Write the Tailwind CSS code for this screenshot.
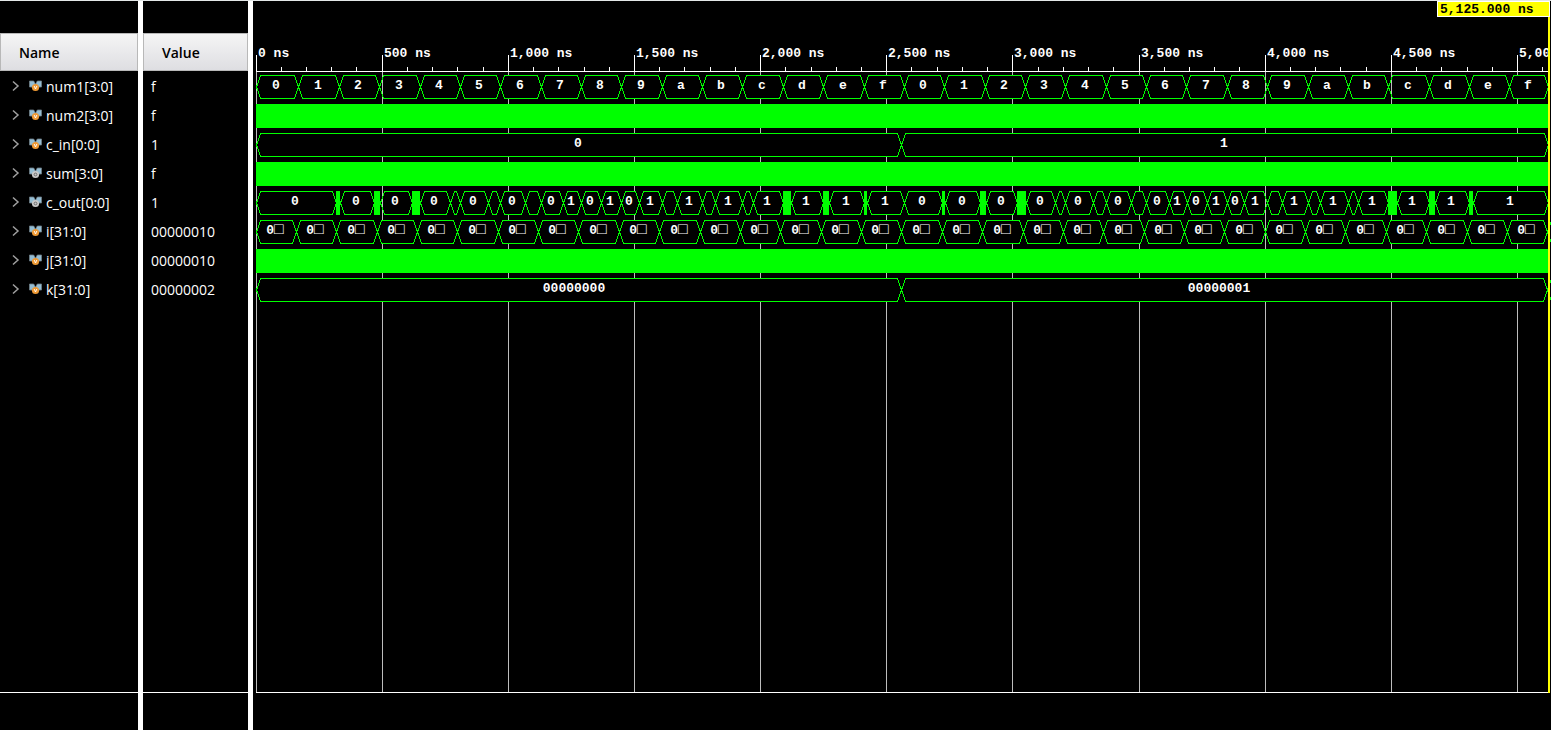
<!DOCTYPE html>
<html lang="en">
<head>
<meta charset="utf-8">
<title>Waveform viewer</title>
<script src="https://cdn.jsdelivr.net/npm/@tailwindcss/browser@4"></script>
</head>
<body class="bg-black">
<main class="flex h-screen min-h-96 overflow-hidden border-t border-[#e4e8e8] bg-black font-['Open_Sans','Noto_Sans',sans-serif] text-sm text-white">
  <section class="flex w-[138px] shrink-0 flex-col pt-8">
    <table class="w-full border-separate border-spacing-0">
      <thead><tr><th scope="col" class="h-[38px] border border-[#b8b8b8] bg-linear-to-b from-[#f5f5f5] to-[#dedee2] p-0 pt-0.5 pl-[18px] text-left font-semibold text-black">Name</th></tr></thead>
      <tbody id="names"></tbody>
    </table>
    <div class="mt-auto h-[38px] shrink-0 border-t border-white"></div>
  </section>
  <div class="w-[5px] shrink-0 bg-white"></div>
  <section class="flex w-[105px] shrink-0 flex-col pt-8">
    <table class="w-full border-separate border-spacing-0">
      <thead><tr><th scope="col" class="h-[38px] border border-[#b8b8b8] bg-linear-to-b from-[#f5f5f5] to-[#dedee2] p-0 pt-0.5 pl-[18px] text-left font-semibold text-black">Value</th></tr></thead>
      <tbody id="values"></tbody>
    </table>
    <div class="mt-auto h-[38px] shrink-0 border-t border-white"></div>
  </section>
  <div class="w-[5px] shrink-0 bg-white"></div>
  <section class="min-w-0 flex-1">
    <svg id="wave" class="block h-full w-full font-['Liberation_Mono','DejaVu_Sans_Mono',monospace] text-[13px] font-bold" shape-rendering="crispEdges" role="img" aria-label="Signal waveforms"></svg>
  </section>
</main>
<script>
const signals = [
  ['num1[3:0]', 'f', 1], ['num2[3:0]', 'f', 1], ['c_in[0:0]', '1', 1], ['sum[3:0]', 'f', 0],
  ['c_out[0:0]', '1', 0], ['i[31:0]', '00000010', 1], ['j[31:0]', '00000010', 1], ['k[31:0]', '00000002', 1]
];
const badge = v => v
  ? '<circle cx="6.500" cy="7.500" r="3.600" fill="#ef9a35"/><path d="M5.200 6l1.300 3 1.300-3" fill="none" stroke="#fff" stroke-width=".9"/>'
  : '<circle cx="6.500" cy="7.500" r="3.600" fill="#c9c9c9"/><circle cx="6.500" cy="7.500" r="1.400" fill="none" stroke="#666" stroke-width=".9"/>';
document.getElementById('names').innerHTML = signals.map(([n, , v]) => `<tr><td class="h-[29px] p-0 pt-0.5"><div class="flex items-center pl-3">
  <button type="button" aria-label="Expand ${n}" class="mr-[9px] mb-0.5 block"><svg class="block" width="8" height="12" viewBox="0 0 8 12"><path d="M1 1.500L6 6 1 10.500" fill="none" stroke="#a0a0a0" stroke-width="1.500"/></svg></button>
  <svg class="mr-1 mb-0.5 block" width="13" height="12" viewBox="0 0 13 12"><path d="M.5 1h4.200l1.800 3.200L8.300 1h4.200v6H.5z" fill="#94bdd3" stroke="#6f7f88" stroke-width=".8"/>${badge(v)}</svg>
  <span>${n}</span></div></td></tr>`).join('');
document.getElementById('values').innerHTML = signals.map(s => `<tr><td class="h-[29px] p-0 pt-0.5 pl-2">${s[1]}</td></tr>`).join('');

// Transitions are kept in units of the default 1298-unit wide pane.
const PX = 0.2523, START = 3, END = 1295.5;
const at = t => START + t * PX;
const hex = '0123456789abcdef';

// c_out: [start, end, label]; label '#' is activity too dense to resolve.
const cout = [[256,336,'0'],[336,340,'#'],[340,374,'0'],[374,380,'#'],[380,412,'0'],[412,420,'#'],[420,450,'0'],[450,460,''],[460,488,'0'],[488,500,''],
[500,525,'0'],[525,541,''],[541,563,'0'],[563,581,'1'],[581,601,'0'],[601,621,'1'],[621,639,'0'],[639,662,'1'],[662,677,''],[677,702,'1'],[702,715,''],[715,742,'1'],[742,753,''],
[753,783,'1'],[783,791,'#'],[791,823,'1'],[823,829,'#'],[829,864,'1'],[864,867,'#'],[867,904,'1'],[904,942,'0'],[942,945,'#'],[945,980,'0'],[980,986,'#'],[986,1017,'0'],[1017,1026,'#'],
[1026,1055,'0'],[1055,1065,''],[1065,1093,'0'],[1093,1106,''],[1106,1131,'0'],[1131,1146,''],[1146,1169,'0'],[1169,1187,'1'],[1187,1207,'0'],[1207,1227,'1'],[1227,1244,'0'],[1244,1267,'1'],
[1267,1282,''],[1282,1308,'1'],[1308,1320,''],[1320,1348,'1'],[1348,1358,''],[1358,1388,'1'],[1388,1397,'#'],[1397,1429,'1'],[1429,1435,'#'],[1435,1469,'1'],[1469,1473,'#'],[1473,1548,'1']]
  .map(([a, b, l]) => [a - 253, b - 253, l]);
const num1 = Array.from({length: 32}, (_, n) => [at(n ? 10 + n * 160 : 0), n < 31 ? at(170 + n * 160) : END, hex[n % 16]]);
const cut = '0<tspan class="text-base font-normal">□</tspan>';
const idx = Array.from({length: 32}, (_, n) => [at(n * 160), at(n * 160 + 160), cut]).concat([[at(5120), 1310, '']]);
const cin = [[START, at(2560), '0'], [at(2560), END, '1']];
const kk = [[START, at(2560), '00000000'], [at(2560), at(5120), '00000001'], [at(5120), 1310, '']];
const dense = [[START, END, '#']];
const rows = [num1, dense, cin, dense, cout, idx, dense, kk];

const svg = document.getElementById('wave');
function draw() {
  const W = svg.clientWidth, B = svg.clientHeight - 38, k = W / 1298;
  const X = v => Math.floor(v * k + 0.01);
  const line = (x1, y1, x2, y2, c) => `<path d="M${x1} ${y1}L${x2} ${y2}" stroke="${c}"/>`;
  const e = X(END);
  let o = `<clipPath id="pane"><rect width="${e}" height="${B + 38}"/></clipPath><g clip-path="url(#pane)">`;
  for (let t = 0; t <= 5100; t += 100) {
    const x = X(at(t)) + 0.5;
    if (t % 500) { o += line(x, 66, x, 70, '#fff'); continue; }
    o += line(x, 54, x, 70, '#fff') + line(x, 71, x, B, '#bdbdbd');
    o += `<text x="${x + 1.5}" y="56" fill="#fff">${t.toLocaleString('en-US')} ns</text>`;
  }
  o += '</g>' + line(X(START), 70.5, e, 70.5, '#fff') + line(X(START), B + 0.5, e, B + 0.5, '#fff');
  rows.forEach((segs, r) => {
    const y = 74 + r * 29;
    for (const [s, f, label] of segs) {
      const a = X(s), b = X(f);
      if (label === '#') { o += `<rect x="${a}" y="${y}" width="${b - a}" height="24" fill="#0f0"/>`; continue; }
      const l = a + 0.5, h = b + 0.5, t = y + 0.5, m = y + 12, d = y + 23.5;
      o += `<rect x="${a + 4}" y="${y}" width="${Math.max(0, b - a - 7)}" height="24" fill="#000"/>`;
      o += `<path d="M${l} ${m}L${l + 4} ${t}H${h - 4}L${h} ${m}L${h - 4} ${d}H${l + 4}Z" fill="none" stroke="#0f0"/>`;
      if (label) o += `<text x="${Math.round((a + b) / 2) - (label.length === 8 ? 5 : 1)}" y="${y + 14}" text-anchor="middle" fill="#fff">${label}</text>`;
    }
  });
  o += `<rect x="${e}" y="0" width="2" height="${B + 1}" fill="#ff0"/>`;
  o += `<rect x="${e - 110.5}" y=".5" width="112" height="15" fill="#ff0" stroke="#fff"/>`;
  o += `<text x="${e - 108}" y="12" fill="#000">5,125.000 ns</text>`;
  svg.innerHTML = o;
}
new ResizeObserver(draw).observe(svg.parentElement);
</script>
</body>
</html>
